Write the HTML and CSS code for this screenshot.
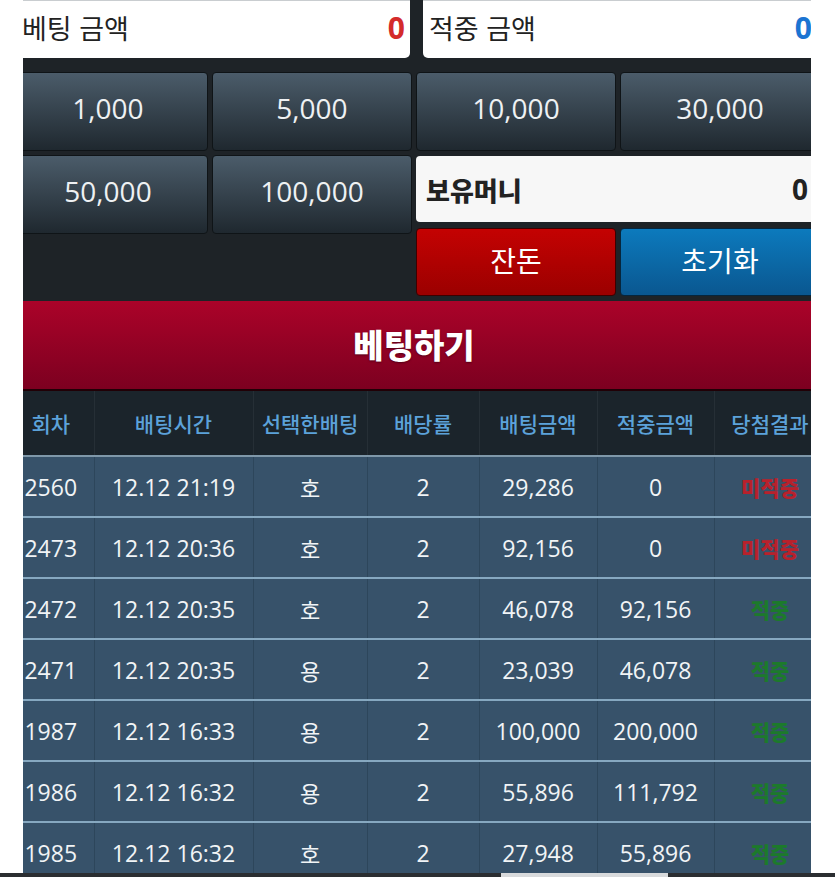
FILE: index.html
```html
<!DOCTYPE html>
<html lang="ko">
<head>
    <meta charset="UTF-8">
    <meta name="viewport" content="width=device-width, initial-scale=1.0">
    <title>배팅</title>
    <link rel="stylesheet" href="styles.css">
</head>
<body>
    <div class="viewport">
        <div class="game">
            <div class="amountRow">
                <div class="amountBox betAmount"><span>베팅 금액</span><b class="red">0</b></div>
                <div class="amountBox winAmount"><span>적중 금액</span><b class="blue">0</b></div>
            </div>

            <div class="chipGrid">
                <span class="chip">1,000</span>
                <span class="chip">5,000</span>
                <span class="chip">10,000</span>
                <span class="chip">30,000</span>
                <span class="chip">50,000</span>
                <span class="chip">100,000</span>
                <div class="sidePanel">
                    <div class="holdBox"><span>보유머니</span><b>0</b></div>
                    <div class="actionRow">
                        <span class="btn btnChange">잔돈</span>
                        <span class="btn btnReset">초기화</span>
                    </div>
                </div>
            </div>

            <div class="betBtn">베팅하기</div>

            <table class="history">
                <colgroup>
                    <col style="width:86px">
                    <col style="width:159px">
                    <col style="width:114px">
                    <col style="width:112px">
                    <col style="width:118px">
                    <col style="width:117px">
                    <col style="width:112px">
                </colgroup>
                <thead>
                    <tr>
                        <th>회차</th>
                        <th>배팅시간</th>
                        <th>선택한배팅</th>
                        <th>배당률</th>
                        <th>배팅금액</th>
                        <th>적중금액</th>
                        <th>당첨결과</th>
                    </tr>
                </thead>
                <tbody>
                    <tr>
                        <td>2560</td><td>12.12 21:19</td><td class="pick">호</td><td>2</td><td>29,286</td><td>0</td><td class="lose">미적중</td>
                    </tr>
                    <tr>
                        <td>2473</td><td>12.12 20:36</td><td class="pick">호</td><td>2</td><td>92,156</td><td>0</td><td class="lose">미적중</td>
                    </tr>
                    <tr>
                        <td>2472</td><td>12.12 20:35</td><td class="pick">호</td><td>2</td><td>46,078</td><td>92,156</td><td class="win">적중</td>
                    </tr>
                    <tr>
                        <td>2471</td><td>12.12 20:35</td><td class="pick">용</td><td>2</td><td>23,039</td><td>46,078</td><td class="win">적중</td>
                    </tr>
                    <tr>
                        <td>1987</td><td>12.12 16:33</td><td class="pick">용</td><td>2</td><td>100,000</td><td>200,000</td><td class="win">적중</td>
                    </tr>
                    <tr>
                        <td>1986</td><td>12.12 16:32</td><td class="pick">용</td><td>2</td><td>55,896</td><td>111,792</td><td class="win">적중</td>
                    </tr>
                    <tr>
                        <td>1985</td><td>12.12 16:32</td><td class="pick">호</td><td>2</td><td>27,948</td><td>55,896</td><td class="win">적중</td>
                    </tr>
                </tbody>
            </table>
        </div>
    </div>
    <div class="bottomBar"><span class="thumb"></span></div>
</body>
</html>
```

FILE: styles.css
```css
* {
    padding: 0;
    margin: 0;
    box-sizing: border-box;
}

body {
    background-color: #fff;
    font-family: "Open Sans", "Noto Sans CJK KR", sans-serif;
    width: 835px;
    overflow: hidden;
}

.viewport {
    width: 788px;
    height: 873px;
    margin-left: 23px;
    overflow: hidden;
}

.game {
    width: 812px;
    margin-left: -15px;
    background-color: #1e2327;
}

/* 금액 표시 */
.amountRow {
    display: flex;
    gap: 13px;
    height: 58px;
}

.amountBox {
    display: flex;
    align-items: center;
    justify-content: space-between;
    height: 58px;
    padding: 0 5px 4px 6px;
    background-color: #fff;
    border-top: 1px solid #c9cdd0;
    border-radius: 0 0 5px 5px;
    color: #222;
    font-size: 27px;
}

.amountBox span {
    font-family: "Noto Sans CJK KR", sans-serif;
}

.betAmount {
    width: 394px;
    margin-left: 8px;
}

.winAmount {
    width: 394px;
}

.amountBox b {
    font-size: 30px;
    font-weight: 700;
}

.amountBox .red {
    color: #d42b2b;
}

.amountBox .blue {
    color: #1b74d2;
}

/* 칩 버튼 */
.chipGrid {
    display: grid;
    grid-template-columns: repeat(4, 200px);
    grid-template-rows: 79px 79px 58px;
    gap: 4px;
    padding-top: 14px;
}

.chip {
    display: flex;
    align-items: center;
    justify-content: center;
    padding-bottom: 7px;
    background: linear-gradient(#4b5c6a, #1f282f);
    border: 1px solid #0f1417;
    border-radius: 4px;
    color: #eef1f3;
    font-size: 28px;
}

.sidePanel {
    grid-column: 3 / 5;
    grid-row: 2 / 4;
    padding-top: 1px;
}

.holdBox {
    display: flex;
    align-items: center;
    justify-content: space-between;
    height: 66px;
    padding: 0 12px 0 10px;
    background-color: #f7f7f7;
    border-radius: 4px;
    color: #222;
}

.holdBox span {
    font-family: "Noto Sans CJK KR", sans-serif;
    font-size: 26px;
    font-weight: 900;
}

.holdBox b {
    font-size: 28px;
    font-weight: 700;
}

.actionRow {
    display: grid;
    grid-template-columns: 200px 200px;
    gap: 4px;
    margin-top: 6px;
}

.btn {
    display: flex;
    align-items: center;
    justify-content: center;
    height: 68px;
    padding-bottom: 4px;
    border-radius: 4px;
    color: #fff;
    font-family: "Noto Sans CJK KR", sans-serif;
    font-size: 28px;
}

.btnChange {
    background: linear-gradient(#c40202, #9b0000);
    border: 1px solid #3d0000;
}

.btnReset {
    background: linear-gradient(#0c7abd, #0a5790);
    border: 1px solid #06263d;
}

/* 베팅하기 */
.betBtn {
    height: 90px;
    margin-top: 5px;
    line-height: 86px;
    text-align: center;
    background: linear-gradient(#ab0329, #7c0020);
    border-bottom: 2px solid #200006;
    color: #fff;
    font-family: "Noto Sans CJK KR", sans-serif;
    font-size: 33px;
    font-weight: 900;
    text-shadow: 0 1px 2px rgba(0, 0, 0, 0.4);
}

/* 배팅 내역 */
.history {
    width: 818px;
    table-layout: fixed;
    border-collapse: collapse;
    text-align: center;
}

.history th {
    height: 65px;
    background-color: #1b242b;
    border-right: 1px solid #262f36;
    border-bottom: 2px solid #7f98aa;
    color: #5ca2da;
    font-family: "Noto Sans CJK KR", sans-serif;
    font-size: 21px;
    font-weight: 500;
}

.history td {
    height: 61px;
    background-color: #37526a;
    border-right: 1px solid #2d465b;
    border-bottom: 2px solid #86a8c0;
    color: #f1f4f6;
    font-size: 23px;
    white-space: nowrap;
}

.history .pick {
    font-family: "Noto Sans CJK KR", sans-serif;
    font-size: 22px;
    font-weight: 400;
}

.history .lose,
.history .win {
    font-family: "Noto Sans CJK KR", sans-serif;
    font-size: 21px;
    font-weight: 900;
}

.history .lose {
    color: #b8212c;
}

.history .win {
    color: #1c7a2b;
}

.bottomBar {
    height: 4px;
    background-color: #2b2e31;
}

.bottomBar .thumb {
    display: block;
    width: 167px;
    height: 4px;
    margin-left: 501px;
    background-color: #d8dadc;
}
```
